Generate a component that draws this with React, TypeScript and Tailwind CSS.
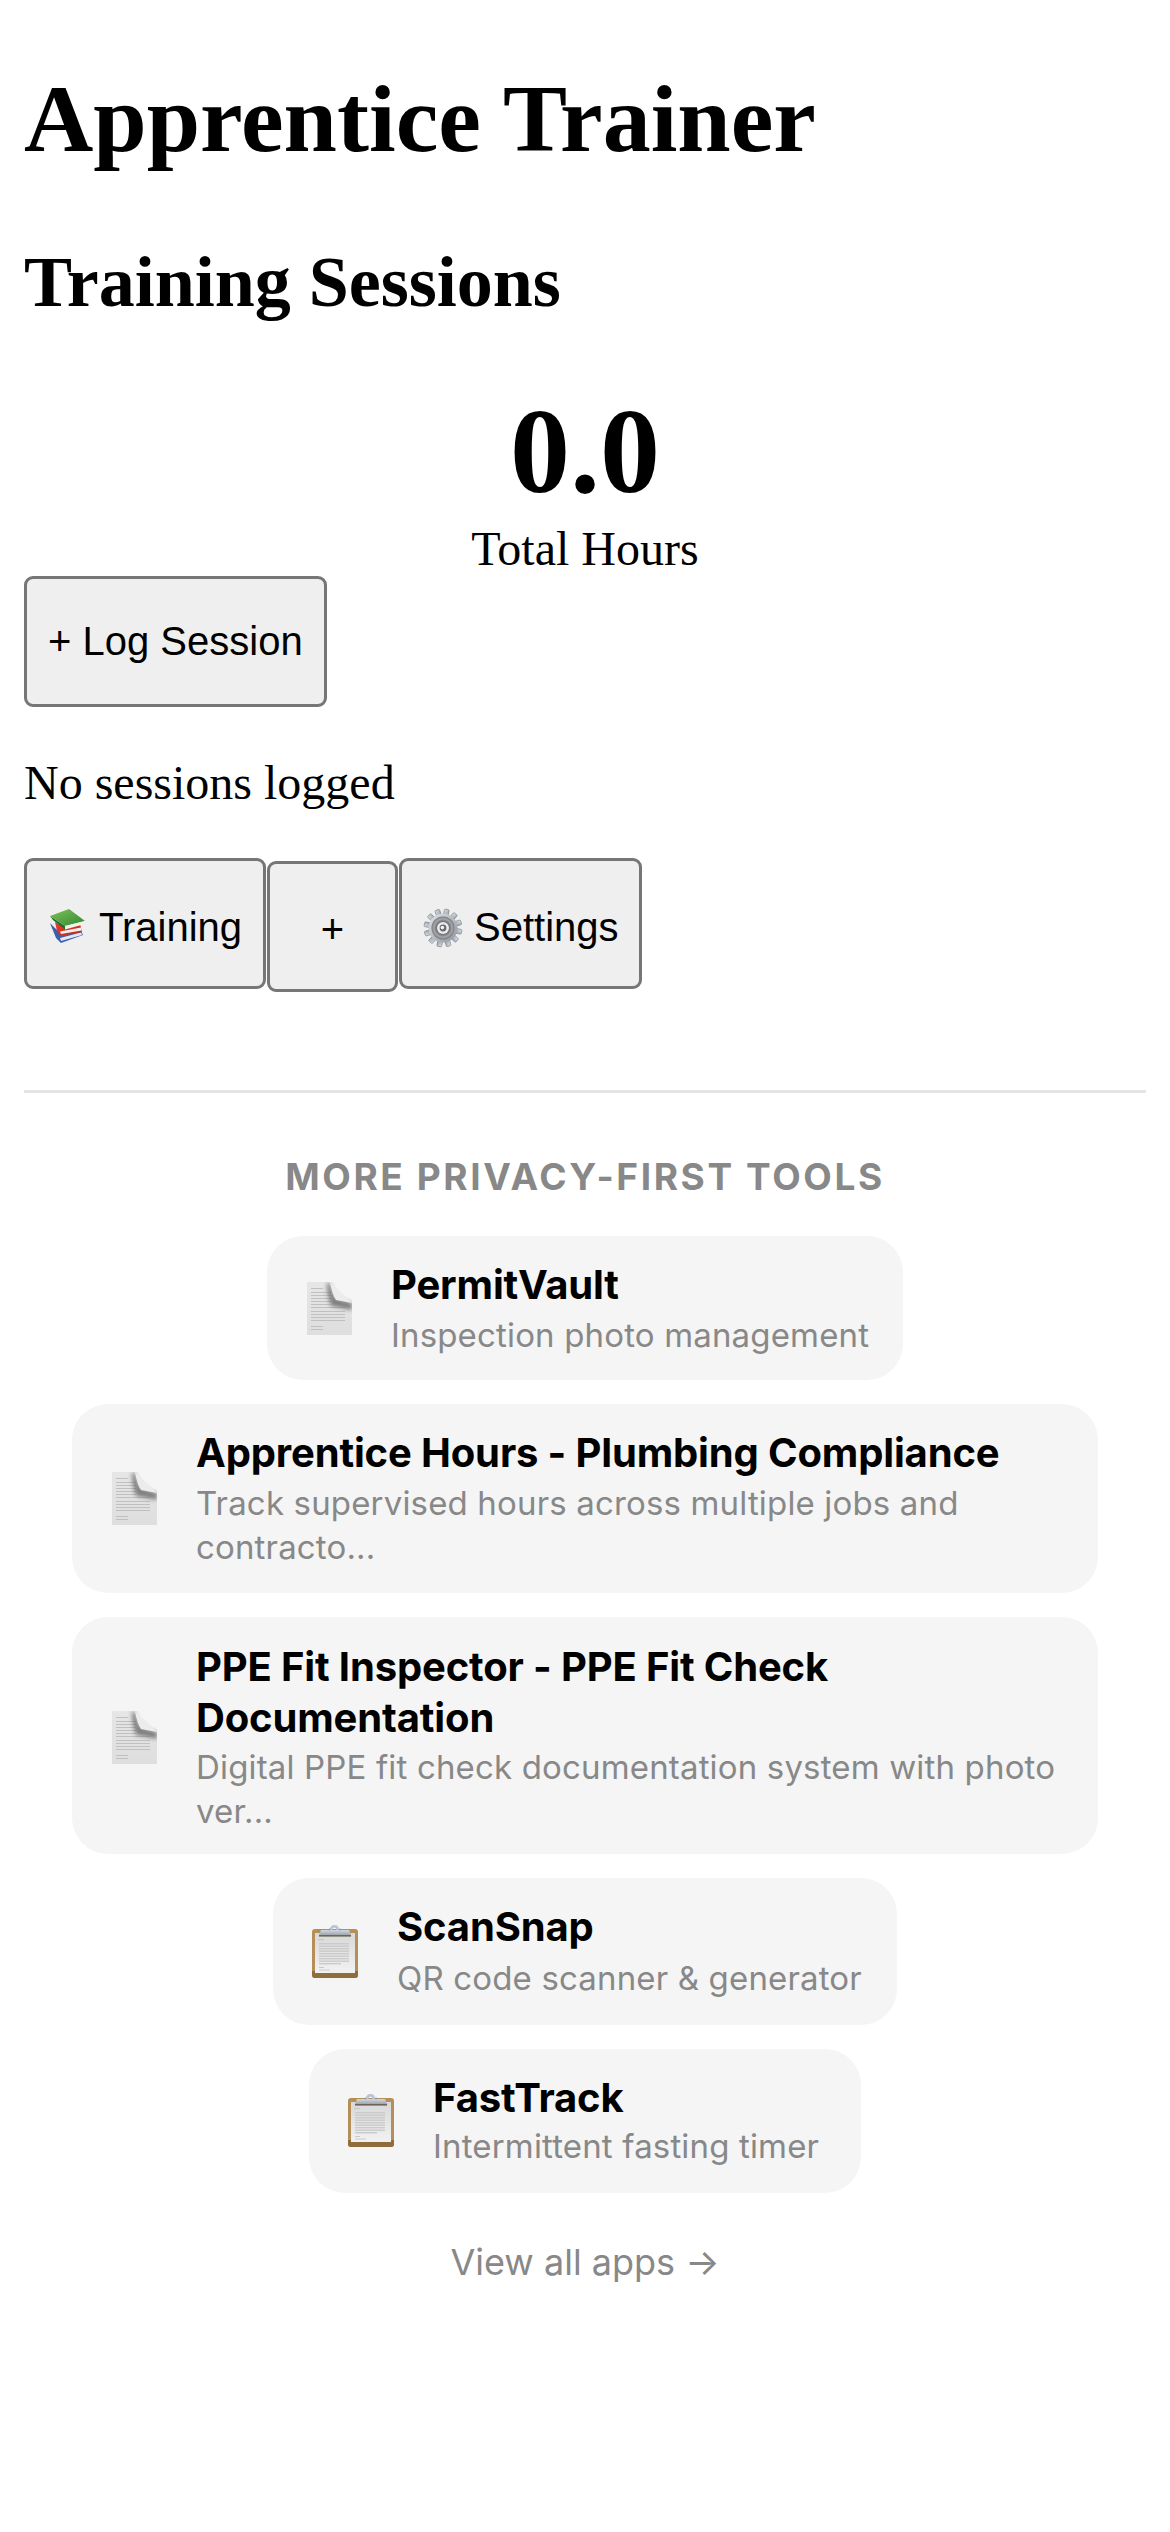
import React from "react";

function Books() {
  return (
    <svg viewBox="0 0 40 40" className="w-[40px] h-[40px] shrink-0 overflow-visible">
      <defs>
        <linearGradient id="bkG" x1="0" y1="0" x2="1" y2="1">
          <stop offset="0" stopColor="#7fc05a" />
          <stop offset="1" stopColor="#2f8a32" />
        </linearGradient>
        <linearGradient id="bkR" x1="0" y1="0" x2="1" y2="1">
          <stop offset="0" stopColor="#e8402c" />
          <stop offset="1" stopColor="#c2241c" />
        </linearGradient>
      </defs>
      <path d="M2 19 L13 30 L33 27 L35 31 L13 39 L8 34 Z" fill="#3b5fae" />
      <path d="M12 34 L33 28.5 L34 31 L13 37 Z" fill="#e6e6ee" />
      <path d="M7 18 L16 23 L32 19 L33 24 L34 28 L13 32 L9 27 Z" fill="url(#bkR)" />
      <path d="M12 27.5 L33 23.5 L33.5 26.5 L13 30 Z" fill="#f3efe8" />
      <path d="M2 12 L17 22 L17 25.5 L5 16 Z" fill="#256b2a" />
      <path d="M2 12 L21 5 L37 17 L17 22 Z" fill="url(#bkG)" />
      <path d="M17 22 L37 17 L37 20 L17 25.5 Z" fill="#f2f2ea" />
    </svg>
  );
}

function Gear() {
  const teeth = [0, 30, 60, 90, 120, 150, 180, 210, 240, 270, 300, 330];
  return (
    <svg viewBox="0 0 40 40" className="w-[40px] h-[40px] shrink-0 overflow-visible">
      <defs>
        <linearGradient id="grM" x1="0" y1="0" x2="1" y2="1">
          <stop offset="0" stopColor="#dfe4ea" />
          <stop offset="1" stopColor="#8f959d" />
        </linearGradient>
        <radialGradient id="grD" cx="0.5" cy="0.5" r="0.5">
          <stop offset="0.45" stopColor="#5c5c60" />
          <stop offset="0.8" stopColor="#a6a7ab" />
          <stop offset="1" stopColor="#77787c" />
        </radialGradient>
      </defs>
      <g transform="translate(20 24)">
        {teeth.map((a) => (
          <rect key={a} x="-2.4" y="-19" width="4.8" height="7" rx="1" fill="url(#grM)" stroke="#63676d" strokeWidth="0.5" transform={`rotate(${a + 12})`} />
        ))}
        <circle r="14.5" fill="url(#grM)" />
        <circle r="11.5" fill="url(#grD)" />
        <circle r="6" fill="#e9ebee" />
        <circle r="3.4" fill="#66686c" />
        <circle cx="-0.6" cy="-0.4" r="1.8" fill="#f4f4f4" />
      </g>
    </svg>
  );
}

function DocIcon({ id }: { id: string }) {
  const lines = [6, 10, 13, 16, 19, 22, 25, 29, 32, 35, 38, 44, 47];
  return (
    <svg viewBox="0 0 45 53" className="w-[45px] h-[53px]">
      <defs>
        <linearGradient id={`pg${id}`} x1="0" y1="0" x2="0" y2="1">
          <stop offset="0" stopColor="#e6e6e6" />
          <stop offset="1" stopColor="#dedede" />
        </linearGradient>
        <filter id={`bl${id}`} x="-30%" y="-30%" width="160%" height="160%">
          <feGaussianBlur stdDeviation="2" />
        </filter>
        <filter id={`sf${id}`} x="-5%" y="-5%" width="110%" height="110%">
          <feGaussianBlur stdDeviation="0.5" />
        </filter>
      </defs>
      <path d="M0 0 H23 L45 21 V53 H0 Z" fill={`url(#pg${id})`} />
      <g filter={`url(#sf${id})`}>
        {lines.map((y, i) => (
          <rect key={y} x="4" y={y} width={i === 0 || i > 10 ? 12 : y < 25 ? 20 : 34} height="0.8" fill="#b8b8b8" />
        ))}
      </g>
      <path d="M23 1 L28 16 L45 21 V28 Q33 25 24 24 Q20 12 20 1 Z" fill="#5a5a5a" filter={`url(#bl${id})`} opacity="0.75" />
      <path d="M23 0 L45 21 L29 18 Q25 12 23 0 Z" fill="#ececec" />
    </svg>
  );
}

function ClipIcon({ id }: { id: string }) {
  const ys = [18, 20.5, 23, 25.5, 28, 30.5, 33, 35.5, 38];
  return (
    <svg viewBox="0 0 46 53" className="w-[46px] h-[53px]">
      <defs>
        <linearGradient id={`ppr${id}`} x1="0" y1="0" x2="0" y2="1">
          <stop offset="0" stopColor="#d8d8d8" />
          <stop offset="1" stopColor="#f2f2f2" />
        </linearGradient>
        <linearGradient id={`clp${id}`} x1="0" y1="0" x2="0" y2="1">
          <stop offset="0" stopColor="#d3d8de" />
          <stop offset="1" stopColor="#9fa5ac" />
        </linearGradient>
      </defs>
      <rect x="0" y="4" width="46" height="49" rx="3" fill="#b58f58" />
      <path d="M0 46 H46 V50 Q46 53 43 53 H3 Q0 53 0 50 Z" fill="#8f6d3c" />
      <rect x="3" y="8" width="40" height="40" fill={`url(#ppr${id})`} />
      <rect x="6" y="14" width="6" height="1.2" fill="#c8c8c8" />
      {ys.map((y) => (
        <rect key={y} x="7" y={y} width={y === 38 ? 22 : 30} height="1.4" fill="#cacaca" />
      ))}
      <rect x="7" y="42" width="5" height="1" fill="#c8c8c8" />
      <rect x="7" y="44.5" width="11" height="1" fill="#cccccc" />
      <path d="M18 5 Q18 0 22.5 0 Q27 0 27 5 L24.5 5 Q24.5 2.5 22.5 2.5 Q20.5 2.5 20.5 5 Z" fill="#b9c3d4" />
      <path d="M9 5 H37 L39 10 H7 Z" fill={`url(#clp${id})`} />
      <rect x="7" y="10" width="32" height="1.6" fill="#6d655c" />
      <circle cx="17.5" cy="4.5" r="0.9" fill="#6f9fd6" />
      <circle cx="28" cy="4.5" r="0.9" fill="#6f9fd6" />
    </svg>
  );
}

function NavButton({ icon, label, width }: { icon: React.ReactNode; label: string; width: string }) {
  return (
    <button className={`flex items-center h-[131px] pl-[21px] bg-[#efefef] border-[3px] border-[#767676] rounded-[9px] text-[40px] text-black font-['Liberation_Sans',sans-serif] ${width}`}>
      {icon}
      <span className="ml-[11px] pt-[7px]">{label}</span>
    </button>
  );
}

function Card({
  icon,
  title,
  sub,
  width,
  gapClass = "mb-[3px]",
  leadClass = "leading-[49px]",
  padClass = "py-[24px]",
}: {
  icon: React.ReactNode;
  title: string;
  sub: string;
  width: string;
  gapClass?: string;
  leadClass?: string;
  padClass?: string;
}) {
  return (
    <a className={`flex items-center gap-[36px] bg-[#f5f5f5] rounded-[36px] pl-[36px] pr-[28px] ${padClass} ${width}`}>
      <span className="w-[52px] shrink-0 flex justify-center">{icon}</span>
      <span className="block min-w-0">
        <span className={`block text-[40px] font-bold tracking-[-0.15px] text-black ${leadClass} ${gapClass}`}>{title}</span>
        <span className="block text-[33px] leading-[44px] tracking-[0.16px] text-[#888888]">{sub}</span>
      </span>
    </a>
  );
}

export default function App() {
  return (
    <div className="bg-white min-h-[2532px] px-[24px] pt-[64px] text-black font-['Liberation_Serif',serif]">
      <h1 className="text-[96px] leading-[110px] font-bold mb-[67px]">Apprentice Trainer</h1>
      <h2 className="text-[72px] leading-[83px] font-bold mb-[59px]">Training Sessions</h2>
      <div className="text-center">
        <div className="text-[120px] leading-[138px] font-bold">0.0</div>
        <div className="text-[48px] leading-[55px]">Total Hours</div>
      </div>
      <button className="block h-[131px] px-[21px] pb-[2px] bg-[#efefef] border-[3px] border-[#767676] rounded-[9px] text-[40px] text-black font-['Liberation_Sans',sans-serif]">
        + Log Session
      </button>
      <p className="text-[48px] leading-[55px] my-[48px]">No sessions logged</p>
      <div className="flex items-start gap-[1px]">
        <NavButton icon={<Books />} label="Training" width="w-[242px]" />
        <button className="mt-[3px] h-[131px] w-[131px] pt-[5px] bg-[#efefef] border-[3px] border-[#767676] rounded-[9px] text-[40px] text-black font-['Liberation_Sans',sans-serif]">
          +
        </button>
        <NavButton icon={<Gear />} label="Settings" width="w-[243px]" />
      </div>
      <div className="mt-[98px] pt-[60px] border-t-[3px] border-[#e5e5e5] font-['Inter',sans-serif]">
        <h3 className="text-center text-[37px] leading-[48px] font-bold tracking-[2.6px] text-[#888888] mb-[35px]">
          MORE PRIVACY-FIRST TOOLS
        </h3>
        <div className="flex flex-col items-center gap-[24px] mx-[48px]">
          <Card
            icon={<DocIcon id="a" />}
            title="PermitVault"
            sub="Inspection photo management"
            width="w-[636px]"
            gapClass="mb-[4px]"
            padClass="pt-[24px] pb-[23px]"
          />
          <Card
            icon={<DocIcon id="b" />}
            title="Apprentice Hours - Plumbing Compliance"
            sub="Track supervised hours across multiple jobs and contracto..."
            width="w-full"
            gapClass="mb-[4px]"
          />
          <Card
            icon={<DocIcon id="c" />}
            title="PPE Fit Inspector - PPE Fit Check Documentation"
            sub="Digital PPE fit check documentation system with photo ver..."
            width="w-full"
            gapClass="mb-[2px]"
            leadClass="leading-[51px]"
            padClass="pt-[24px] pb-[21px]"
          />
          <Card
            icon={<ClipIcon id="d" />}
            title="ScanSnap"
            sub="QR code scanner & generator"
            width="w-[624px]"
            gapClass="mb-[5px]"
            padClass="pt-[24px] pb-[25px]"
          />
          <Card
            icon={<ClipIcon id="e" />}
            title="FastTrack"
            sub="Intermittent fasting timer"
            width="w-[552px]"
            gapClass="mb-[2px]"
            padClass="pt-[24px] pb-[25px]"
          />
        </div>
        <div className="text-center mt-[45px] text-[36px] leading-[48px] text-[#888888]">View all apps →</div>
      </div>
    </div>
  );
}
